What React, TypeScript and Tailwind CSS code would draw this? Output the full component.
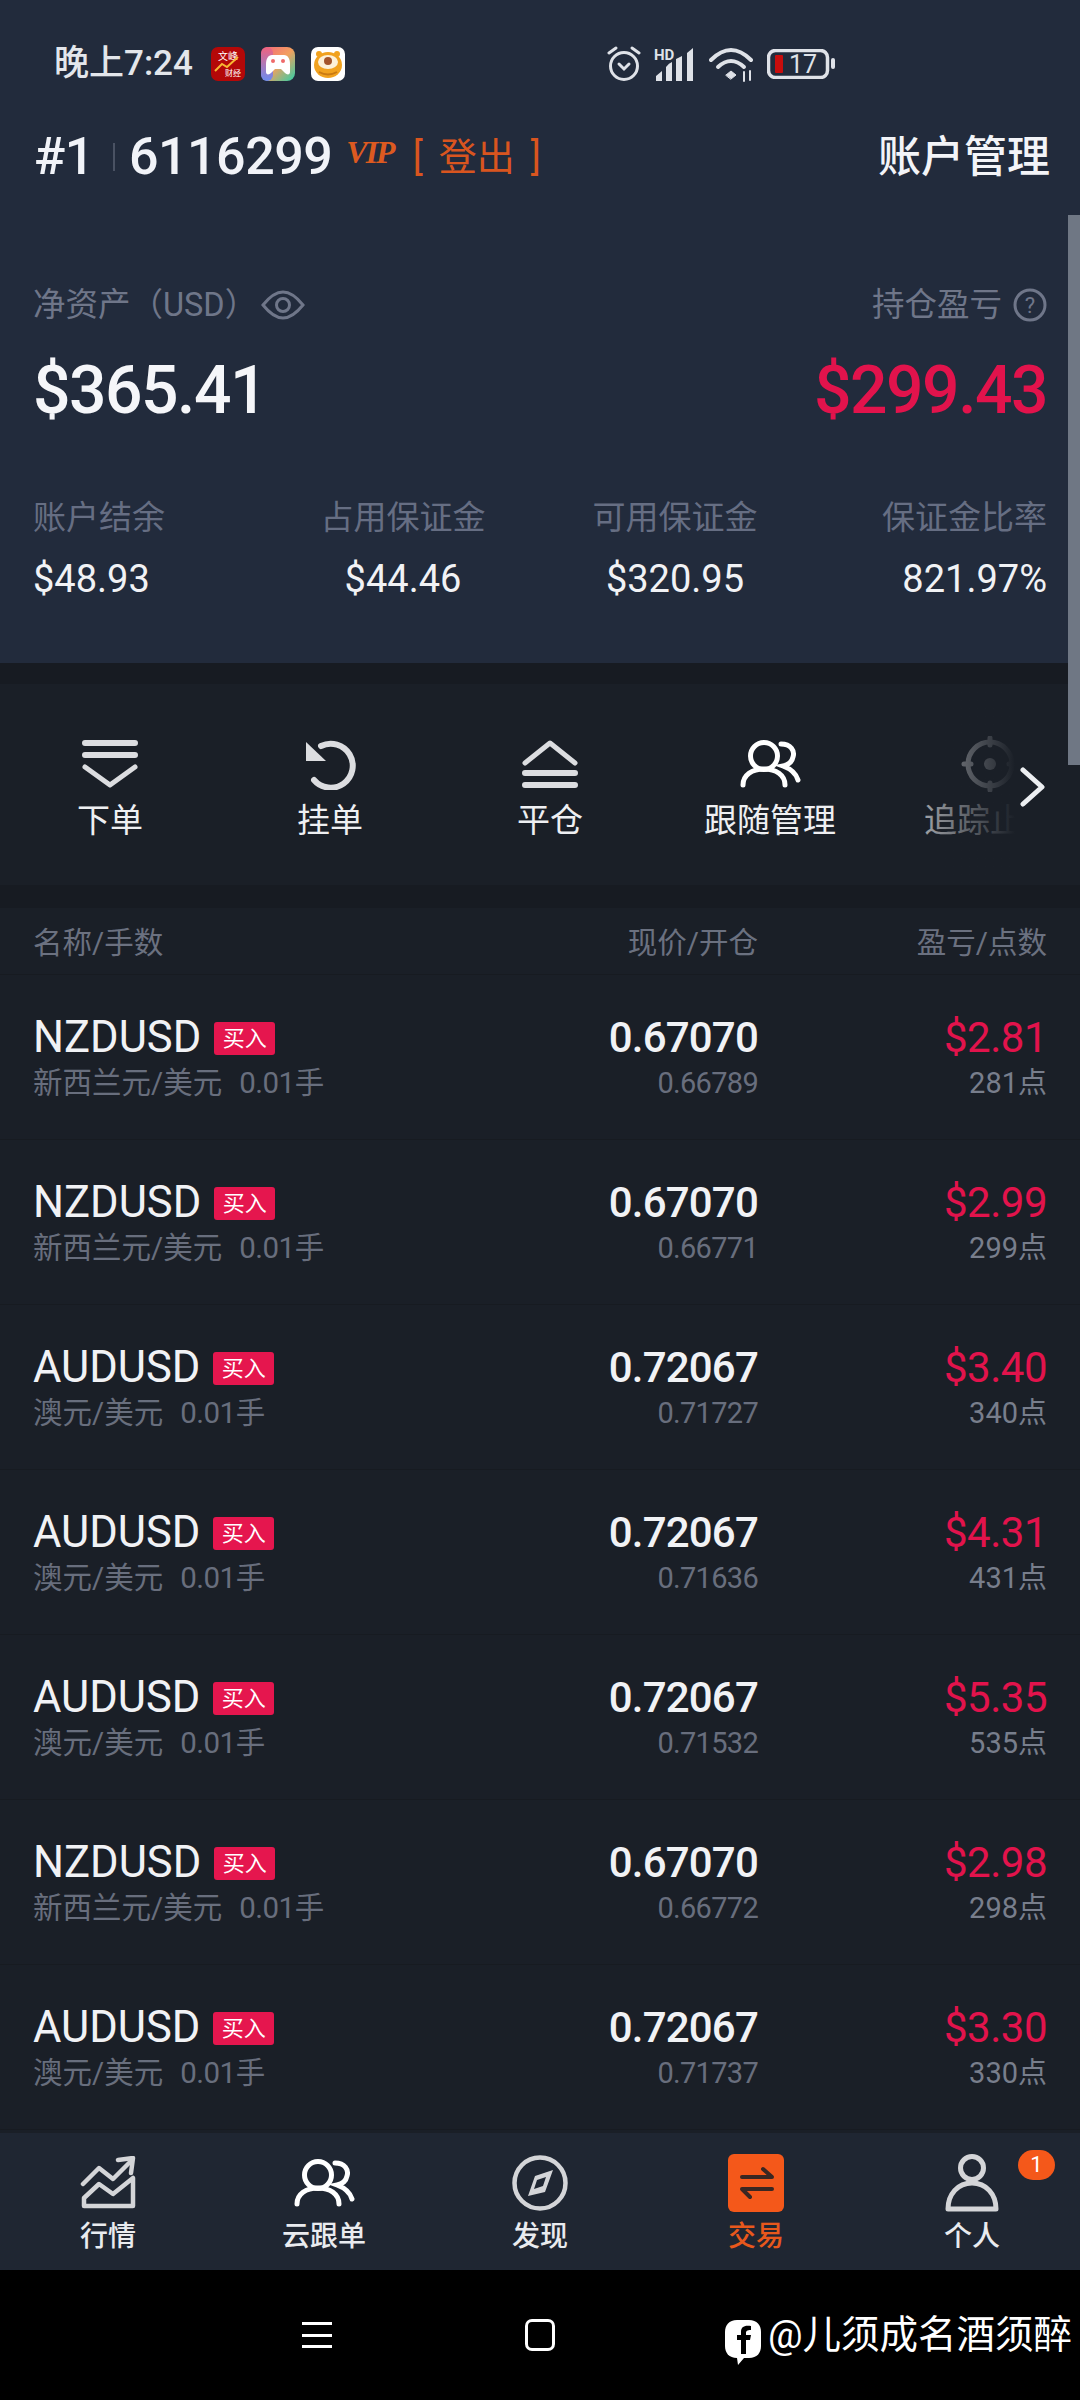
import React from "react";

const orders = [
  { symbol: "NZDUSD", name: "新西兰元/美元", price: "0.67070", open: "0.66789", profit: "$2.81", points: "281点" },
  { symbol: "NZDUSD", name: "新西兰元/美元", price: "0.67070", open: "0.66771", profit: "$2.99", points: "299点" },
  { symbol: "AUDUSD", name: "澳元/美元", price: "0.72067", open: "0.71727", profit: "$3.40", points: "340点" },
  { symbol: "AUDUSD", name: "澳元/美元", price: "0.72067", open: "0.71636", profit: "$4.31", points: "431点" },
  { symbol: "AUDUSD", name: "澳元/美元", price: "0.72067", open: "0.71532", profit: "$5.35", points: "535点" },
  { symbol: "NZDUSD", name: "新西兰元/美元", price: "0.67070", open: "0.66772", profit: "$2.98", points: "298点" },
  { symbol: "AUDUSD", name: "澳元/美元", price: "0.72067", open: "0.71737", profit: "$3.30", points: "330点" },
];

// --- status bar icons ---
const AppIconRed = () => (
  <svg width="34" height="34" viewBox="0 0 34 34">
    <rect width="34" height="34" rx="7" fill="#b40808" />
    <text x="17" y="13" textAnchor="middle" fontSize="10" fill="#fff">文峰</text>
    <path d="M4 24 L11 17 L16 20 L27 10" fill="none" stroke="#f7b733" strokeWidth="2" />
    <text x="22" y="29" textAnchor="middle" fontSize="8" fill="#fff">财经</text>
  </svg>
);

const AppIconGame = () => (
  <svg width="34" height="34" viewBox="0 0 34 34">
    <defs>
      <linearGradient id="game" x1="0" y1="0" x2="1" y2="1">
        <stop offset="0" stopColor="#f2637e" />
        <stop offset="0.5" stopColor="#f3a05e" />
        <stop offset="1" stopColor="#2ed0a8" />
      </linearGradient>
      <linearGradient id="gameLeft" x1="0" y1="0" x2="0" y2="1">
        <stop offset="0" stopColor="#f2637e" />
        <stop offset="1" stopColor="#6c8cf0" />
      </linearGradient>
    </defs>
    <rect width="34" height="34" rx="8" fill="url(#game)" />
    <rect width="12" height="34" rx="6" fill="url(#gameLeft)" />
    <path d="M11 8 H23 C27 8 29 12 29 17 V25 C29 28 26 28 24 26 L20 22 H14 L10 26 C8 28 5 28 5 25 V17 C5 12 7 8 11 8 Z" fill="#fff" />
    <circle cx="12" cy="14" r="2" fill="#ef6a6a" />
    <circle cx="22" cy="14" r="2" fill="#ef6a6a" />
  </svg>
);

const AppIconTiger = () => (
  <svg width="34" height="34" viewBox="0 0 34 34">
    <rect width="34" height="34" rx="7" fill="#fff" />
    <ellipse cx="17" cy="18" rx="14" ry="13" fill="#f1a21f" />
    <circle cx="8" cy="7" r="3" fill="#f1a21f" />
    <circle cx="26" cy="7" r="3" fill="#f1a21f" />
    <ellipse cx="17" cy="15" rx="10" ry="7" fill="#fdf1d8" />
    <circle cx="17" cy="14" r="4" fill="#a5552b" />
    <path d="M8 25 Q17 30 26 25" fill="none" stroke="#c97a12" strokeWidth="2" />
  </svg>
);

const StatusIcons = () => (
  <div className="flex items-center text-[#dfe2e8]">
    <svg width="36" height="36" viewBox="0 0 36 36" fill="none" stroke="currentColor" strokeWidth="3" strokeLinecap="round">
      <circle cx="18" cy="20" r="13.5" />
      <path d="M3 7 L10 2 M26 2 L33 7" />
      <path d="M13 18 L18 23 L23 18" />
    </svg>
    <svg width="44" height="34" viewBox="0 0 44 34" className="ml-[12px]">
      <text x="0" y="13" fontSize="15" fontWeight="700" fill="currentColor">HD</text>
      <path d="M2 34 V29 L8 24 V34 Z M12 34 V20 Q15 16 18 15 V34 Z M22 34 V12 L28 9 V34 Z" fill="currentColor" />
      <path d="M33 34 V6 L39 1 V34 Z" fill="currentColor" />
    </svg>
    <svg width="46" height="36" viewBox="0 0 46 36" fill="none" stroke="currentColor" strokeLinecap="round" className="ml-[11px]">
      <path d="M2 14 Q22 -6 42 14" strokeWidth="4" />
      <path d="M9 21 Q22 9 35 21" strokeWidth="4" />
      <path d="M17 29 L22 25 L27 29 L22 33 Z" fill="currentColor" strokeWidth="1" />
      <path d="M35 26 V35 M41 25 V34" strokeWidth="2" />
    </svg>
    <svg width="70" height="30" viewBox="0 0 70 30" className="ml-[12px]">
      <rect x="1.5" y="1.5" width="59" height="27" rx="7" fill="none" stroke="currentColor" strokeWidth="3.5" />
      <rect x="8" y="6" width="8" height="18" rx="1" fill="#c90d0d" />
      <text x="22" y="24" fontSize="25" fill="currentColor">17</text>
      <rect x="64" y="9" width="4" height="11" rx="2" fill="currentColor" />
    </svg>
  </div>
);

// --- toolbar icons ---
const PlaceIcon = () => (
  <svg width="56" height="50" viewBox="0 0 56 50" fill="none" stroke="#dcdde0" strokeWidth="6" strokeLinecap="round" strokeLinejoin="round">
    <path d="M3 4 H53 M3 16 H53" />
    <path d="M3 28 L28 46 L53 28" strokeWidth="5" />
  </svg>
);

const UndoIcon = () => (
  <svg width="56" height="52" viewBox="0 0 56 52" fill="none">
    <path d="M19 8 A22 22 0 1 1 12 42" stroke="#dcdde0" strokeWidth="6" strokeLinecap="round" />
    <path d="M4 4 V23 H24 Z" fill="#dcdde0" />
  </svg>
);

const CloseIcon = () => (
  <svg width="56" height="50" viewBox="0 0 56 50" fill="none" stroke="#dcdde0" strokeWidth="6" strokeLinecap="round" strokeLinejoin="round">
    <path d="M3 24 L28 4 L53 24" strokeWidth="5" />
    <path d="M3 34 H53 M3 46 H53" />
  </svg>
);

const PeopleIcon = ({ className }: { className?: string }) => (
  <svg width="62" height="48" viewBox="0 0 62 48" fill="none" stroke="#fff" strokeWidth="5" strokeLinecap="round" className={className}>
    <circle cx="25" cy="16" r="13.5" />
    <path d="M4 45 C4 35 13 29 25 29 C37 29 46 35 46 45" />
    <path d="M42 4 C52 4 56 11 54 17 C53 22 49 25 44 26 C52 29 57 33 59 40" />
  </svg>
);

const TargetIcon = () => (
  <svg width="60" height="56" viewBox="0 0 60 56" fill="none" stroke="#dcdde0" strokeWidth="5" strokeLinecap="round">
    <circle cx="30" cy="28" r="22" />
    <path d="M30 2 V9 M30 47 V54 M4 28 H11 M49 28 H56" />
    <circle cx="30" cy="28" r="6" fill="#dcdde0" stroke="none" />
  </svg>
);

// --- bottom nav icons ---
const ChartIcon = () => (
  <svg width="56" height="54" viewBox="0 0 56 54" fill="none" stroke="#d4d5d8" strokeWidth="4.5" strokeLinejoin="round" strokeLinecap="round">
    <path d="M3 28 L19 12 L33 23 L51 5" />
    <path d="M38 4 L53 2 L51 17" />
    <path d="M4 50 V42 L19 28 L33 38 L53 22 V50 Z" />
  </svg>
);

const CompassIcon = () => (
  <svg width="56" height="56" viewBox="0 0 56 56" fill="none">
    <circle cx="28" cy="28" r="25.5" stroke="#d4d5d8" strokeWidth="4.5" />
    <path fillRule="evenodd" d="M41 15 L33 37 L16 41 L23 21 Z M34 22 L25 25 L22 34 L31 31 Z" fill="#d4d5d8" />
  </svg>
);

const TradeIcon = () => (
  <svg width="56" height="58" viewBox="0 0 56 58">
    <rect width="56" height="58" rx="6" fill="#f4581a" />
    <path d="M14 23 H44 L35 15 M44 35 H14 L22 43" fill="none" stroke="#3a2722" strokeWidth="4" strokeLinecap="round" strokeLinejoin="round" />
  </svg>
);

const PersonIcon = () => (
  <svg width="56" height="58" viewBox="0 0 56 58" fill="none" stroke="#d4d5d8" strokeWidth="5" strokeLinejoin="round">
    <circle cx="28" cy="14" r="11.5" />
    <path d="M4 55 C4 40 14 29 28 29 C42 29 52 40 52 55 Z" />
  </svg>
);

const ToolItem = ({ icon, label }: { icon: React.ReactNode; label: string }) => (
  <div className="w-[220px] shrink-0 flex flex-col items-center">
    <div className="h-[58px] mt-[1px] flex items-center justify-center">{icon}</div>
    <div className="mt-[8px] h-[40px] leading-[40px] text-[33px] text-[#eeeff2] whitespace-nowrap">{label}</div>
  </div>
);

const NavItem = ({ icon, label, active }: { icon: React.ReactNode; label: string; active?: boolean }) => (
  <div className="flex flex-col items-center">
    <div className="h-[58px] flex items-center justify-center">{icon}</div>
    <div className={`mt-[7px] h-[36px] leading-[36px] text-[28px] font-medium ${active ? "text-[#e8581c]" : "text-[#e9ebef]"}`}>{label}</div>
  </div>
);

const OrderRow = ({ o }: { o: (typeof orders)[number] }) => (
  <div className="h-[165px] pt-[40px] pl-[33px] pr-[33px] grid grid-cols-[1fr_180px_289px] border-b border-[#171b21]">
    <div>
      <div className="h-[46px] flex items-center">
        <span className="text-[43.5px] leading-[46px] text-[#f1f2f5]">{o.symbol}</span>
        <span className="ml-[13px] w-[61px] h-[33px] rounded-[3px] bg-[#e5164e] text-white text-[22px] leading-[33px] text-center">买入</span>
      </div>
      <div className="mt-[2px] h-[40px] leading-[40px] text-[29.5px] text-[#686e7d] flex">
        <span>{o.name}</span>
        <span className="ml-[17px] tracking-[-0.5px]">0.01手</span>
      </div>
    </div>
    <div className="text-right">
      <div className="h-[46px] leading-[46px] text-[42px] font-medium tracking-[-0.8px] text-[#f1f2f5]">{o.price}</div>
      <div className="mt-[2px] h-[40px] leading-[40px] text-[29px] tracking-[-0.7px] text-[#686e7d]">{o.open}</div>
    </div>
    <div className="text-right">
      <div className="h-[46px] leading-[46px] text-[42px] tracking-[-0.5px] text-[#e2134c]">{o.profit}</div>
      <div className="mt-[2px] h-[40px] leading-[40px] text-[29px] text-[#787e8c]">{o.points}</div>
    </div>
  </div>
);

export default function App() {
  return (
    <div className="relative w-[1080px] h-[2400px] overflow-hidden bg-black [font-family:Roboto,'Noto_Sans_CJK_SC',sans-serif]">
      {/* account panel */}
      <div className="h-[663px] bg-[#222b3c]">
        <div className="h-[128px] pl-[54px] pr-[243px] flex items-center">
          <span className="text-[35px] font-medium text-[#e3e6eb] w-[142px] whitespace-nowrap">晚上7:24</span>
          <div className="ml-[15px] flex gap-[16px]">
            <AppIconRed />
            <AppIconGame />
            <AppIconTiger />
          </div>
          <div className="ml-auto">
            <StatusIcons />
          </div>
        </div>

        <div className="h-[58px] pl-[34px] pr-[30px] flex items-center">
          <span className="text-[52px] font-medium tracking-[-0.5px] text-[#f1f3f8]">#1</span>
          <span className="ml-[19px] w-[2px] h-[28px] bg-[#4a5263]"></span>
          <span className="ml-[14px] text-[52px] font-medium tracking-[-0.5px] text-[#f1f3f8]">6116299</span>
          <span className="ml-[14px] mb-[10px] text-[32px] tracking-[-2px] font-bold italic text-[#dd5a20] [font-family:'Liberation_Serif',serif]">VIP</span>
          <span className="ml-[19px] text-[38px] text-[#d9551f] flex gap-[16px]">
            <span>[</span>
            <span>登出</span>
            <span>]</span>
          </span>
          <span className="ml-auto text-[43px] font-medium text-[#f3f4f8]">账户管理</span>
        </div>

        <div className="mt-[99px] h-[40px] pl-[33px] pr-[33px] flex items-center text-[32.5px] text-[#6f7689]">
          <span>净资产（USD）</span>
          <svg width="46" height="30" viewBox="0 0 44 30" fill="none" stroke="#6f7689" strokeWidth="3" className="ml-[3px]">
            <path d="M2 15 C10 5 16 2 22 2 C28 2 34 5 42 15 C34 25 28 28 22 28 C16 28 10 25 2 15 Z" />
            <circle cx="22" cy="15" r="6.5" />
          </svg>
          <span className="ml-auto">持仓盈亏</span>
          <svg width="34" height="34" viewBox="0 0 34 34" className="ml-[11px]">
            <circle cx="17" cy="17" r="15" fill="none" stroke="#6f7689" strokeWidth="3" />
            <text x="17" y="25" textAnchor="middle" fontSize="22" fill="#6f7689">?</text>
          </svg>
        </div>

        <div className="mt-[25px] h-[80px] pl-[33px] pr-[33px] flex items-center justify-between text-[66px] font-medium tracking-[-1.5px]">
          <span className="text-[#f5f6f9]">$365.41</span>
          <span className="text-[#e2134c]">$299.43</span>
        </div>

        <div className="mt-[68px] pl-[33px] pr-[33px] grid grid-cols-[256px_228px_316px_1fr] text-[33px] leading-[40px] text-[#666e83]">
          <span>账户结余</span>
          <span className="text-center">占用保证金</span>
          <span className="text-center">可用保证金</span>
          <span className="text-right">保证金比率</span>
        </div>
        <div className="mt-[18px] pl-[33px] pr-[33px] grid grid-cols-[256px_228px_316px_1fr] text-[38px] leading-[46px] text-[#f1f2f5]">
          <span>$48.93</span>
          <span className="text-center">$44.46</span>
          <span className="text-center">$320.95</span>
          <span className="text-right">821.97%</span>
        </div>
      </div>

      {/* action toolbar */}
      <div className="h-[21px] bg-[#171b22]"></div>
      <div className="relative h-[201px] pt-[50px] bg-[#1a1f27] flex overflow-hidden">
        <ToolItem icon={<PlaceIcon />} label="下单" />
        <ToolItem icon={<UndoIcon />} label="挂单" />
        <ToolItem icon={<CloseIcon />} label="平仓" />
        <ToolItem icon={<PeopleIcon />} label="跟随管理" />
        <ToolItem icon={<TargetIcon />} label="追踪止损" />
        <div className="absolute top-0 bottom-0 left-[870px] w-[145px] bg-linear-to-r from-transparent to-[#1a1f27]"></div>
        <div className="absolute top-0 bottom-0 left-[1015px] right-0 bg-[#1a1f27]"></div>
        <svg width="26" height="40" viewBox="0 0 26 40" fill="none" stroke="#eceef1" strokeWidth="5" strokeLinecap="round" strokeLinejoin="round" className="absolute left-[1020px] top-[83px]">
          <path d="M3 3 L22 20 L3 37" />
        </svg>
      </div>
      <div className="h-[23px] bg-[#171b22]"></div>

      {/* positions */}
      <div className="h-[1225px] bg-[#1a1f27]">
        <div className="h-[67px] pt-[5px] pl-[33px] pr-[33px] grid grid-cols-[1fr_180px_289px] items-center text-[29.5px] text-[#6b7180] border-b border-[#171b21]">
          <span>名称/手数</span>
          <span className="text-right">现价/开仓</span>
          <span className="text-right">盈亏/点数</span>
        </div>
        {orders.map((o, i) => (
          <OrderRow key={i} o={o} />
        ))}
      </div>

      {/* bottom tabs */}
      <div className="relative h-[137px] pt-[21px] bg-[#1f2632] grid grid-cols-5">
        <NavItem icon={<ChartIcon />} label="行情" />
        <NavItem icon={<PeopleIcon />} label="云跟单" />
        <NavItem icon={<CompassIcon />} label="发现" />
        <NavItem icon={<TradeIcon />} label="交易" active />
        <NavItem icon={<PersonIcon />} label="个人" />
        <div className="absolute left-[1018px] top-[17px] w-[37px] h-[30px] rounded-full bg-[#f4581a] text-white text-[22px] leading-[30px] text-center">1</div>
      </div>

      {/* android keys + watermark */}
      <div className="relative h-[130px] flex items-start bg-black">
        <div className="ml-[302px] mt-[52px] w-[30px] h-[26px] flex flex-col justify-between">
          <span className="h-[3px] bg-white"></span>
          <span className="h-[3px] bg-white"></span>
          <span className="h-[3px] bg-white"></span>
        </div>
        <div className="ml-[193px] mt-[49px] w-[30px] h-[32px] rounded-[7px] border-[3px] border-white"></div>
        <svg width="38" height="46" viewBox="0 0 38 46" className="absolute left-[724px] top-[50px]">
          <path d="M13 0 H25 C33 0 37 5 37 12 V26 C37 33 33 38 25 38 H20 L14 45 L13 38 C5 38 1 33 1 26 V12 C1 5 5 0 13 0 Z" fill="#fff" />
          <path d="M17 34 V20 H13 V15 H17 V12 C17 7 20 5 27 6 V10 C23 10 22 11 22 13 V15 H27 L26 20 H22 V34 Z" fill="#000" />
        </svg>
        <span className="absolute left-[768px] top-[41px] text-[38.5px] leading-[48px] text-white whitespace-nowrap">@儿须成名酒须醉</span>
      </div>

      {/* scroll thumb */}
      <div className="absolute left-[1068px] top-[215px] w-[12px] h-[550px] bg-[#6f7784]"></div>
    </div>
  );
}
